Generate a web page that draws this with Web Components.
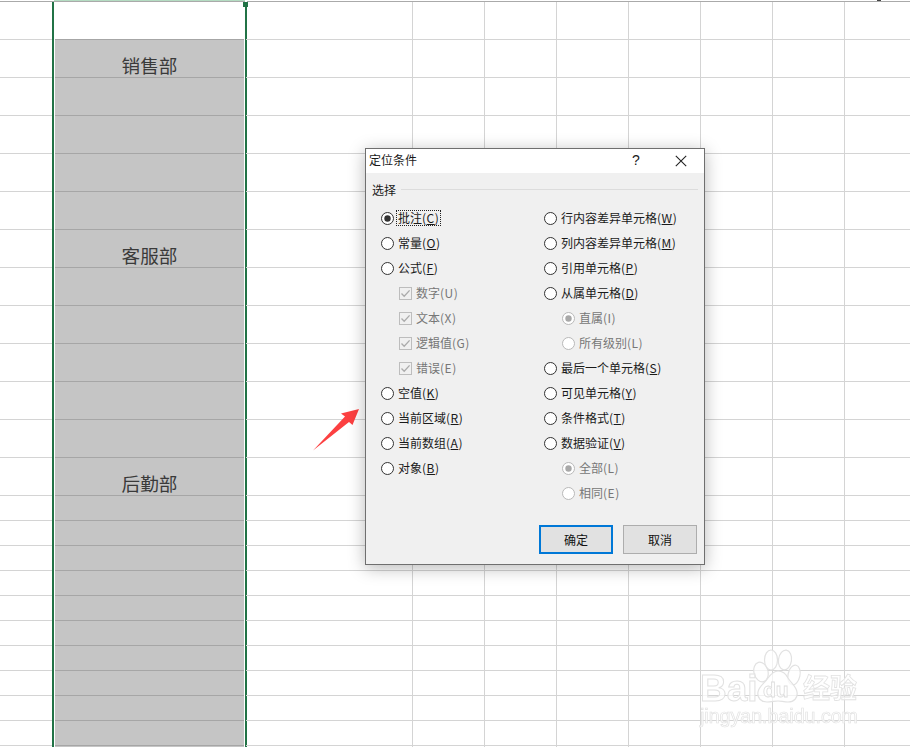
<!DOCTYPE html>
<html lang="zh">
<head>
<meta charset="utf-8">
<title>定位条件</title>
<style>
  html, body { margin: 0; height: 100%; background: #fff; overflow: hidden; }
  body { font-family: "Noto Sans CJK SC", "Liberation Sans", sans-serif; }
</style>
</head>
<body>

<excel-sheet>
  <sheet-label slot="sales">销售部</sheet-label>
  <sheet-label slot="service">客服部</sheet-label>
  <sheet-label slot="logistics">后勤部</sheet-label>
</excel-sheet>

<red-arrow></red-arrow>
<baidu-mark></baidu-mark>

<goto-dialog heading="定位条件">
  <div slot="left">
    <option-row kind="radio" checked focused label="批注" key="C"></option-row>
    <option-row kind="radio" label="常量" key="O"></option-row>
    <option-row kind="radio" label="公式" key="F"></option-row>
    <option-row kind="check" checked disabled indent label="数字" key="U"></option-row>
    <option-row kind="check" checked disabled indent label="文本" key="X"></option-row>
    <option-row kind="check" checked disabled indent label="逻辑值" key="G"></option-row>
    <option-row kind="check" checked disabled indent label="错误" key="E"></option-row>
    <option-row kind="radio" label="空值" key="K"></option-row>
    <option-row kind="radio" label="当前区域" key="R"></option-row>
    <option-row kind="radio" label="当前数组" key="A"></option-row>
    <option-row kind="radio" label="对象" key="B"></option-row>
  </div>
  <div slot="right">
    <option-row kind="radio" label="行内容差异单元格" key="W"></option-row>
    <option-row kind="radio" label="列内容差异单元格" key="M"></option-row>
    <option-row kind="radio" label="引用单元格" key="P"></option-row>
    <option-row kind="radio" label="从属单元格" key="D"></option-row>
    <option-row kind="radio" checked disabled indent label="直属" key="I"></option-row>
    <option-row kind="radio" disabled indent label="所有级别" key="L"></option-row>
    <option-row kind="radio" label="最后一个单元格" key="S"></option-row>
    <option-row kind="radio" label="可见单元格" key="Y"></option-row>
    <option-row kind="radio" label="条件格式" key="T"></option-row>
    <option-row kind="radio" label="数据验证" key="V"></option-row>
    <option-row kind="radio" checked disabled indent label="全部" key="L"></option-row>
    <option-row kind="radio" disabled indent label="相同" key="E"></option-row>
  </div>
  <dialog-button slot="buttons" primary>确定</dialog-button>
  <dialog-button slot="buttons">取消</dialog-button>
</goto-dialog>

<script>
// worksheet: grid lines, selected column, merged labels
class ExcelSheet extends HTMLElement {
  constructor() {
    super();
    this.attachShadow({ mode: 'open' });
  }
  connectedCallback() {
    const colWidths = [53, 193, 167, 72, 72, 72, 72, 72, 72, 66];
    const rowHeights = [38, 38, 38, 38, 38, 38, 38, 38, 38, 38, 38, 38, 38, 25, 25, 25, 25, 25, 25, 25, 25, 25, 25, 25];
    const slots = { 1: 'sales', 6: 'service', 12: 'logistics' };
    let cells = '';
    rowHeights.forEach((h, r) => {
      colWidths.forEach((w, c) => {
        const sel = c === 1;
        const fill = sel && r > 0;
        const head = sel && r === 0;
        const noRight = c === 0 || c === 9;
        const inner = fill && slots[r] ? `<slot name="${slots[r]}"></slot>` : '';
        cells += `<div class="cell${sel ? ' sel' : ''}${fill ? ' fill' : ''}${head ? ' head' : ''}${noRight ? ' nr' : ''}">${inner}</div>`;
      });
    });
    this.shadowRoot.innerHTML = `
      <style>
        :host { display: block; width: 910px; height: 747px; overflow: hidden; position: relative; }
        .top { height: 1px; border-bottom: 1px solid #aaa; position: relative; }
        .top i { position: absolute; left: 54px; width: 191px; top: 0; height: 1px; background: #b4dcc2; }
        .top b { position: absolute; left: 877px; width: 4px; top: 0; height: 1px; background: #444; }
        .grid {
          display: grid;
          grid-template-columns: ${colWidths.map(w => w + 'px').join(' ')};
          grid-template-rows: ${rowHeights.map(h => h + 'px').join(' ')};
        }
        .cell { box-sizing: border-box; border-right: 1px solid #d4d4d4; border-bottom: 1px solid #d4d4d4; }
        .cell.nr { border-right: none; }
        .cell.sel { border-right: 2px solid #217346; border-left: 2px solid #217346; margin-left: -1px; margin-right: -1px; border-bottom: none; }
        .cell.head { background: linear-gradient(#a6a6a6, #a6a6a6) left bottom / 100% 1px no-repeat; box-shadow: inset 1px 0 0 #fff, inset -1px 0 0 #fff; }
        .cell.fill { background: linear-gradient(#a6a6a6, #a6a6a6) left bottom / 100% 1px no-repeat, #c5c5c5; box-shadow: inset 1px 0 0 #fff, inset -1px 0 0 #fff;
          display: flex; align-items: flex-end; justify-content: center; }
        .handle { position: absolute; left: 243px; top: 2px; width: 5px; height: 5px; background: #217346; }
        .handle-gap { position: absolute; left: 245px; top: 0; width: 2px; height: 2px; background: #fff; }
      </style>
      <div class="top"><i></i><b></b></div>
      <div class="grid">${cells}</div>
      <div class="handle-gap"></div>
      <div class="handle"></div>
    `;
  }
}

class SheetLabel extends HTMLElement {
  constructor() {
    super();
    this.attachShadow({ mode: 'open' }).innerHTML = `
      <style>
        :host { display: block; font: 18.6px/24px "Noto Sans CJK SC", sans-serif; color: #3a3a3a; margin-bottom: 1px; }
      </style>
      <slot></slot>`;
  }
}

// one radio or checkbox line in the dialog
class OptionRow extends HTMLElement {
  constructor() {
    super();
    this.attachShadow({ mode: 'open' });
  }
  connectedCallback() {
    const kind = this.getAttribute('kind');
    const checked = this.hasAttribute('checked');
    const disabled = this.hasAttribute('disabled');
    const focused = this.hasAttribute('focused');
    const ink = disabled ? '#b8b8b8' : '#333';
    const mark = disabled ? '#a8a8a8' : '#333';
    const icon = kind === 'radio'
      ? `<svg width="13" height="13" viewBox="0 0 13 13"><circle cx="6.5" cy="6.5" r="6" fill="#fff" stroke="${ink}"/>${checked ? `<circle cx="6.5" cy="6.5" r="3.2" fill="${mark}"/>` : ''}</svg>`
      : `<svg width="13" height="13" viewBox="0 0 13 13"><rect x=".5" y=".5" width="12" height="12" fill="#f0f0f0" stroke="#bdbdbd"/><path d="M2.5 6.5 5.2 9.3 10.6 3.4" fill="none" stroke="#ababab" stroke-width="1.3"/></svg>`;
    this.shadowRoot.innerHTML = `
      <style>
        :host { display: flex; align-items: center; height: 25px; gap: 2px;
          font: 12px/14px "Noto Sans CJK SC", sans-serif; color: ${disabled ? '#777' : '#1a1a1a'}; white-space: nowrap; }
        :host([indent]) { margin-left: 18px; }
        svg { flex: none; display: block; }
        .t { padding: 0 1px; border: 1px dotted transparent; margin-bottom: 2px; }
        .t.f { border-color: #222; }
        .p { letter-spacing: .5px; }
        .k { text-decoration: ${disabled ? 'none' : 'underline'}; text-underline-offset: 1px; }
      </style>
      ${icon}<span class="t${focused ? ' f' : ''}">${this.getAttribute('label')}<span class="p">(<span class="k">${this.getAttribute('key')}</span>)</span></span>`;
  }
}

class DialogButton extends HTMLElement {
  constructor() {
    super();
    this.attachShadow({ mode: 'open' }).innerHTML = `
      <style>
        :host { display: flex; align-items: center; justify-content: center; box-sizing: border-box;
          width: 74px; height: 29px; background: #e1e1e1; border: 1px solid #adadad;
          font: 12px "Noto Sans CJK SC", sans-serif; color: #111; }
        :host([primary]) { border: 2px solid #0078d7; }
      </style>
      <slot></slot>`;
  }
}

class GotoDialog extends HTMLElement {
  constructor() {
    super();
    this.attachShadow({ mode: 'open' });
  }
  connectedCallback() {
    this.shadowRoot.innerHTML = `
      <style>
        :host { position: absolute; left: 365px; top: 148px; width: 340px; height: 417px; box-sizing: border-box;
          display: flex; flex-direction: column; background: #f0f0f0; border: 1px solid #6f6f6f;
          box-shadow: 0 3px 16px rgba(0,0,0,.28); font: 12px "Noto Sans CJK SC", sans-serif; color: #1a1a1a; }
        .title { display: flex; align-items: center; height: 24px; box-sizing: border-box; padding: 0 0 4px 3px; background: #fff; flex: none; }
        .title span { flex: 1; }
        .help { width: 12px; text-align: center; font: 14px "Liberation Sans", sans-serif; margin-right: 33px; margin-top: 2px; }
        .close { margin-right: 17px; margin-top: 4px; display: block; }
        .legend { display: flex; align-items: center; gap: 5px; height: 16px; margin: 8px 6px 0; flex: none; }
        .legend span { flex: none; }
        .legend i { flex: 1; height: 1px; background: #dcdcdc; }
        .cols { display: flex; padding: 9px 0 0 15px; flex: none; }
        .col-l { width: 163px; }
        .bar { display: flex; justify-content: flex-end; gap: 10px; margin-top: auto; padding: 0 7px 10px 0; }
      </style>
      <div class="title">
        <span>${this.getAttribute('heading')}</span>
        <div class="help">?</div>
        <svg class="close" width="12" height="12" viewBox="0 0 12 12"><path d="M.8.8 11.2 11.2M11.2.8.8 11.2" stroke="#222" stroke-width="1.1" fill="none"/></svg>
      </div>
      <div class="legend"><span>选择</span><i></i></div>
      <div class="cols">
        <div class="col-l"><slot name="left"></slot></div>
        <div><slot name="right"></slot></div>
      </div>
      <div class="bar"><slot name="buttons"></slot></div>`;
  }
}

// annotation arrow lying over the sheet
class RedArrow extends HTMLElement {
  constructor() {
    super();
    this.attachShadow({ mode: 'open' }).innerHTML = `
      <style>:host { position: absolute; left: 305px; top: 400px; width: 65px; height: 60px; } svg { display: block; }</style>
      <svg width="65" height="60" viewBox="0 0 65 60"><path d="M8 50.5 40 16.5 36 13.5 54 9 47.5 25 44 22Z" fill="#fc4041"/></svg>`;
  }
}

// faint watermark, bottom right corner
class BaiduMark extends HTMLElement {
  constructor() {
    super();
    this.attachShadow({ mode: 'open' }).innerHTML = `
      <style>
        :host { position: absolute; left: 690px; top: 640px; width: 180px; height: 90px; color: rgba(255,255,255,.75); filter: blur(.35px); }
        svg { position: absolute; left: 0; top: 0; }
        .t { position: absolute; font-family: "Liberation Sans", sans-serif; font-weight: 700; -webkit-text-stroke: 1px #e2e2e2; white-space: nowrap; }
        .bai { left: 10px; top: 29px; font-size: 37px; line-height: 40px; }
        .du { left: 73px; top: 38px; font-size: 21px; line-height: 24px; -webkit-text-stroke: .8px #dcdcdc; }
        .jy { left: 113px; top: 32px; font: 700 27px/30px "Noto Sans CJK SC", sans-serif; -webkit-text-stroke: .8px #e2e2e2; }
        .url { left: 10px; top: 66px; font-size: 19.6px; line-height: 20px; font-weight: 400; -webkit-text-stroke: .7px #e2e2e2; }
      </style>
      <svg width="180" height="90" viewBox="0 0 180 90" fill="rgba(255,255,255,.7)" stroke="#e2e2e2" stroke-width="1.2">
        <ellipse cx="71" cy="32" rx="7" ry="10" transform="rotate(-15 71 32)"/>
        <ellipse cx="81" cy="20" rx="6.5" ry="10"/>
        <ellipse cx="95" cy="20" rx="6.5" ry="10" transform="rotate(8 95 20)"/>
        <ellipse cx="104" cy="35" rx="6" ry="10" transform="rotate(12 104 35)"/>
        <path d="M77 62c-6 0-10-4-9-10 1-6 7-9 10-14 3-4 6-7 10-7s8 3 10 7c3 5 8 8 9 14 1 6-3 10-9 10-4 0-7-1-10-1s-7 1-11 1Z"/>
      </svg>
      <span class="t bai">Bai</span><span class="t du">du</span><span class="t jy">经验</span>
      <span class="t url">jingyan.baidu.com</span>`;
  }
}

customElements.define('excel-sheet', ExcelSheet);
customElements.define('sheet-label', SheetLabel);
customElements.define('option-row', OptionRow);
customElements.define('dialog-button', DialogButton);
customElements.define('goto-dialog', GotoDialog);
customElements.define('red-arrow', RedArrow);
customElements.define('baidu-mark', BaiduMark);
</script>
</body>
</html>
